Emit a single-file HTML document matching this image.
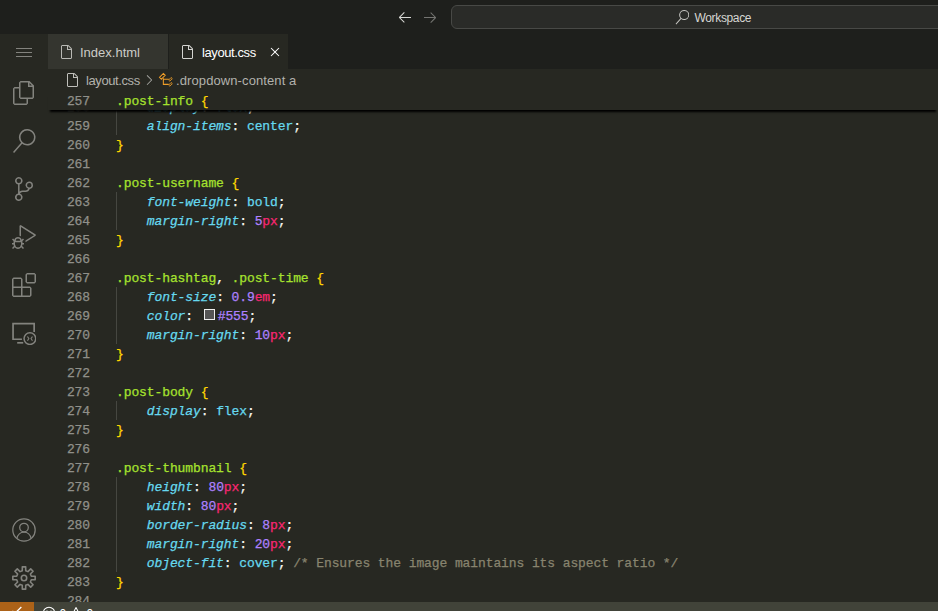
<!DOCTYPE html>
<html lang="en">
<head>
<meta charset="utf-8">
<title>layout.css - Workspace</title>
<style>
*{box-sizing:border-box;margin:0;padding:0}
html,body{width:938px;height:611px;overflow:hidden;background:#272822}
body{position:relative;font-family:"Liberation Sans",sans-serif;font-size:13px;color:#ccccc7;-webkit-font-smoothing:antialiased}
.abs{position:absolute}
/* title bar */
#title{left:0;top:0;width:938px;height:34px;background:#1e1f1c}
#cmd{left:451px;top:5px;width:520px;height:24px;border:1px solid #484946;border-radius:6px;background:#2a2b28}
#ws{left:694.5px;top:6px;letter-spacing:-0.35px;height:24px;line-height:24px;font-size:12px;color:#d6d6d2;white-space:nowrap}
/* tab strip */
#tabs{left:0;top:34px;width:938px;height:35px;background:#1e1f1c}
#actbar{left:0;top:34px;width:48px;height:568px;background:#272822}
.tab{top:34px;height:35px;white-space:nowrap}
#tab1{left:48px;width:120px;background:#34352f;color:#ccccc7}
#tab2{left:169px;width:119px;background:#272822;color:#ffffff}
.tab .lbl{position:absolute;top:1px;height:35px;line-height:35px;font-size:13px}
.ico16{position:absolute;width:16px;height:16px}
/* breadcrumbs */
#crumbs{left:48px;top:69px;width:890px;height:22px;background:#272822;color:#b2b2ad;white-space:nowrap}
#crumbs .lbl{position:absolute;top:1px;height:22px;line-height:22px;font-size:13px}
/* editor */
#editor{left:48px;top:91px;width:890px;height:511px;background:#272822;overflow:hidden}
.ln{position:absolute;left:0;width:890px;height:19px;line-height:19px;font-family:"Liberation Mono",monospace;font-size:13px;letter-spacing:-0.1px;white-space:pre;color:#f8f8f2;-webkit-text-stroke:.25px}
.ln .n{position:absolute;left:0;top:1px;width:42px;text-align:right;color:#90908a}
.ln .c{position:absolute;left:68px;top:1px}
.g{position:absolute;left:68px;width:1px;background:#464741}
#sticky{left:48px;top:91px;width:890px;height:19px;background:#272822;box-shadow:0 4px 2px -2px #000}
/* syntax */
.s{color:#a6e22e}.b{color:#ffd700}.p{color:#66d9ef;font-style:italic}.v{color:#66d9ef}
.u{color:#ae81ff}.k{color:#f92672}.m{color:#88846f}
.sw{display:inline-block;width:11px;height:11px;border:1px solid #eeeeee;background:#555555;margin:0 2.9px 0 3.1px;vertical-align:0px}
/* status bar */
#status{left:0;top:602px;width:938px;height:22px;background:#414339;color:#ffffff;font-size:12px}
#remote{left:0;top:602px;width:34px;height:22px;background:#ac6218}
.st{position:absolute;top:603px;height:22px;line-height:22px;font-size:12px;color:#fff}
</style>
</head>
<body>
<div id="title" class="abs"></div>
<div id="cmd" class="abs"></div>
<div id="ws" class="abs">Workspace</div>
<div id="tabs" class="abs"></div>
<div id="actbar" class="abs"></div>
<div id="tab1" class="abs tab"><span class="lbl" style="left:32px">Index.html</span></div>
<div id="tab2" class="abs tab"><span class="lbl" style="left:33px;letter-spacing:-0.4px">layout.css</span></div>
<div id="crumbs" class="abs"><span class="lbl" style="left:38px;letter-spacing:-0.4px">layout.css</span><span class="lbl" style="left:128px;letter-spacing:.1px">.dropdown-content a</span></div>
<div id="editor" class="abs">
<!--LINES-->
<div class="ln" style="top:6px"><span class="n">258</span><span class="g" style="top:0;height:19px"></span><span class="c">    <span class="p">display</span>: <span class="v">flex</span>;</span></div>
<div class="ln" style="top:25px"><span class="n">259</span><span class="g" style="top:0;height:19px"></span><span class="c">    <span class="p">align-items</span>: <span class="v">center</span>;</span></div>
<div class="ln" style="top:44px"><span class="n">260</span><span class="c"><span class="b">}</span></span></div>
<div class="ln" style="top:63px"><span class="n">261</span><span class="c"></span></div>
<div class="ln" style="top:82px"><span class="n">262</span><span class="c"><span class="s">.post-username</span> <span class="b">{</span></span></div>
<div class="ln" style="top:101px"><span class="n">263</span><span class="g" style="top:0;height:19px"></span><span class="c">    <span class="p">font-weight</span>: <span class="v">bold</span>;</span></div>
<div class="ln" style="top:120px"><span class="n">264</span><span class="g" style="top:0;height:19px"></span><span class="c">    <span class="p">margin-right</span>: <span class="u">5</span><span class="k">px</span>;</span></div>
<div class="ln" style="top:139px"><span class="n">265</span><span class="c"><span class="b">}</span></span></div>
<div class="ln" style="top:158px"><span class="n">266</span><span class="c"></span></div>
<div class="ln" style="top:177px"><span class="n">267</span><span class="c"><span class="s">.post-hashtag</span>, <span class="s">.post-time</span> <span class="b">{</span></span></div>
<div class="ln" style="top:196px"><span class="n">268</span><span class="g" style="top:0;height:19px"></span><span class="c">    <span class="p">font-size</span>: <span class="u">0.9</span><span class="k">em</span>;</span></div>
<div class="ln" style="top:215px"><span class="n">269</span><span class="g" style="top:0;height:19px"></span><span class="c">    <span class="p">color</span>: <span class="sw"></span><span class="u">#555</span>;</span></div>
<div class="ln" style="top:234px"><span class="n">270</span><span class="g" style="top:0;height:19px"></span><span class="c">    <span class="p">margin-right</span>: <span class="u">10</span><span class="k">px</span>;</span></div>
<div class="ln" style="top:253px"><span class="n">271</span><span class="c"><span class="b">}</span></span></div>
<div class="ln" style="top:272px"><span class="n">272</span><span class="c"></span></div>
<div class="ln" style="top:291px"><span class="n">273</span><span class="c"><span class="s">.post-body</span> <span class="b">{</span></span></div>
<div class="ln" style="top:310px"><span class="n">274</span><span class="g" style="top:0;height:19px"></span><span class="c">    <span class="p">display</span>: <span class="v">flex</span>;</span></div>
<div class="ln" style="top:329px"><span class="n">275</span><span class="c"><span class="b">}</span></span></div>
<div class="ln" style="top:348px"><span class="n">276</span><span class="c"></span></div>
<div class="ln" style="top:367px"><span class="n">277</span><span class="c"><span class="s">.post-thumbnail</span> <span class="b">{</span></span></div>
<div class="ln" style="top:386px"><span class="n">278</span><span class="g" style="top:0;height:19px"></span><span class="c">    <span class="p">height</span>: <span class="u">80</span><span class="k">px</span>;</span></div>
<div class="ln" style="top:405px"><span class="n">279</span><span class="g" style="top:0;height:19px"></span><span class="c">    <span class="p">width</span>: <span class="u">80</span><span class="k">px</span>;</span></div>
<div class="ln" style="top:424px"><span class="n">280</span><span class="g" style="top:0;height:19px"></span><span class="c">    <span class="p">border-radius</span>: <span class="u">8</span><span class="k">px</span>;</span></div>
<div class="ln" style="top:443px"><span class="n">281</span><span class="g" style="top:0;height:19px"></span><span class="c">    <span class="p">margin-right</span>: <span class="u">20</span><span class="k">px</span>;</span></div>
<div class="ln" style="top:462px"><span class="n">282</span><span class="g" style="top:0;height:19px"></span><span class="c">    <span class="p">object-fit</span>: <span class="v">cover</span>; <span class="m">/* Ensures the image maintains its aspect ratio */</span></span></div>
<div class="ln" style="top:481px"><span class="n">283</span><span class="c"><span class="b">}</span></span></div>
<div class="ln" style="top:500px"><span class="n">284</span><span class="c"></span></div>
<!--/LINES-->
</div>
<div id="sticky" class="abs"><div class="ln" style="top:0"><span class="n">257</span><span class="c"><span class="s">.post-info</span> <span class="b">{</span></span></div></div>
<div id="status" class="abs"></div>
<div id="remote" class="abs"></div>
<div class="st" style="left:59.5px">0</div>
<div class="st" style="left:86.5px">0</div>
<!--ICONS-->
<svg class="abs" style="left:397px;top:9px" width="16" height="16" viewBox="0 0 16 16" fill="#d8d8d4" ><path d="M7 3.093l-5 5V8.8l5 5 .707-.707-4.146-4.147H14v-1H3.56L7.708 3.8 7 3.093z"/></svg>
<svg class="abs" style="left:422.3px;top:9px" width="16" height="16" viewBox="0 0 16 16" fill="#747471" ><path d="M9 13.887l5-5V8.18l-5-5-.707.707 4.146 4.147H2v1h10.44l-4.147 4.147.707.706z"/></svg>
<svg class="abs" style="left:674.9px;top:10px" width="14.5" height="14.5" viewBox="0 0 24 24" fill="#c8c8c4" ><path d="M15.25 0a8.25 8.25 0 0 0-6.18 13.72L1 22.88l1.12 1 8.05-9.12A8.251 8.251 0 1 0 15.25.01V0zm0 15a6.75 6.75 0 1 1 0-13.5 6.75 6.75 0 0 1 0 13.5z"/></svg>
<svg class="abs" style="left:16px;top:44px" width="16" height="16" viewBox="0 0 16 16" fill="#83837e" ><path d="M16 5H0V4h16v1zm0 8H0v-1h16v1zm0-4.008H0V8h16v.992z"/></svg>
<svg class="abs" style="left:12px;top:81px" width="24" height="24" viewBox="0 0 24 24" fill="#83837e" color="#83837e"><path d="M17.5 0h-9L7 1.5V6H2.5L1 7.5v15.07L2.5 24h12.07L16 22.57V18h4.7l1.3-1.43V4.5L17.5 0zm0 2.12l2.38 2.38H17.5V2.12zm-3 20.38h-12v-15H7v9.07L8.5 18h6v4.5zm6-6h-12v-15H16V6h4.5v10.5z"/></svg>
<svg class="abs" style="left:12px;top:129px" width="24" height="24" viewBox="0 0 24 24" fill="#83837e" color="#83837e"><path d="M15.25 0a8.25 8.25 0 0 0-6.18 13.72L1 22.88l1.12 1 8.05-9.12A8.251 8.251 0 1 0 15.25.01V0zm0 15a6.75 6.75 0 1 1 0-13.5 6.75 6.75 0 0 1 0 13.5z"/></svg>
<svg class="abs" style="left:12px;top:177px" width="24" height="24" viewBox="0 0 24 24" fill="#83837e" color="#83837e"><path d="M21.007 8.222A3.738 3.738 0 0 0 15.045 5.2a3.737 3.737 0 0 0 1.156 6.583 2.988 2.988 0 0 1-2.668 1.67h-2.99a4.456 4.456 0 0 0-2.989 1.165V7.4a3.737 3.737 0 1 0-1.494 0v9.117a3.776 3.776 0 1 0 1.816.099 2.99 2.99 0 0 1 2.668-1.667h2.99a4.484 4.484 0 0 0 4.223-3.039 3.736 3.736 0 0 0 3.25-3.687zM4.565 3.738a2.242 2.242 0 1 1 4.484 0 2.242 2.242 0 0 1-4.484 0zm4.484 16.441a2.242 2.242 0 1 1-4.484 0 2.242 2.242 0 0 1 4.484 0zm8.221-9.715a2.242 2.242 0 1 1 0-4.485 2.242 2.242 0 0 1 0 4.485z"/></svg>
<svg class="abs" style="left:12px;top:225px" width="24" height="24" viewBox="0 0 24 24" fill="#83837e" color="#83837e"><path d="M10.94 13.5l-1.32 1.32a3.73 3.73 0 0 0-7.24 0L1.06 13.5 0 14.56l1.72 1.72-.22.22V18H0v1.5h1.5v.08c.077.489.214.966.41 1.42L0 22.94 1.06 24l1.65-1.65A4.308 4.308 0 0 0 6 24a4.31 4.31 0 0 0 3.29-1.65L10.94 24 12 22.94 10.09 21c.198-.464.336-.951.41-1.45v-.1H12V18h-1.5v-1.5l-.22-.22L12 14.56l-1.06-1.06zM6 13.5a2.25 2.25 0 0 1 2.25 2.25h-4.5A2.25 2.25 0 0 1 6 13.5zm3 6a3.33 3.33 0 0 1-3 3 3.33 3.33 0 0 1-3-3v-2.25h6v2.25zm14.76-9.9v1.26L13.5 17.37V15.6l8.5-5.37L9 2v9.46a5.07 5.07 0 0 0-1.5-.72V.63L8.64 0l15.12 9.6z"/></svg>
<svg class="abs" style="left:12px;top:273px" width="24" height="24" viewBox="0 0 24 24" fill="#83837e" color="#83837e"><path fill-rule="evenodd" clip-rule="evenodd" d="M13.5 1.5L15 0h7.5L24 1.5V9l-1.5 1.5H15L13.5 9V1.5zm1.5 0V9h7.5V1.5H15zM0 15V6l1.5-1.5H9L10.5 6v7.5H18l1.5 1.5v7.5L18 24H1.5L0 22.5V15zm9-1.5V6H1.5v7.5H9zM9 15H1.5v7.5H9V15zm1.5 7.5H18V15h-7.5v7.5z"/></svg>
<svg class="abs" style="left:12px;top:321px" width="24" height="24" viewBox="0 0 24 24" fill="#83837e" color="#83837e"><g fill="none" stroke="currentColor" stroke-width="1.7"><path d="M22.15 10.9V2.65H1.05v15.6h8.9"/><path d="M5.2 21.8h6"/><circle cx="17.9" cy="17.6" r="5.85" stroke-width="1.5"/><path d="M15.45 15.5l1.4 2.1-1.4 2.1M20.45 15.5l-1.4 2.1 1.4 2.1" stroke-width="1.1"/></g></svg>
<svg class="abs" style="left:12px;top:518px" width="24" height="24" viewBox="0 0 24 24" fill="#83837e" color="#83837e"><g fill="none" stroke="currentColor" stroke-width="1.25"><circle cx="12" cy="12" r="11.2"/><circle cx="12" cy="9.6" r="4.3"/><path d="M4.9 20.4c.7-3.6 3.6-6.3 7.1-6.3s6.4 2.7 7.1 6.3"/></g></svg>
<svg class="abs" style="left:12px;top:566px" width="24" height="24" viewBox="0 0 24 24" fill="#83837e" color="#83837e"><g fill="none" stroke="currentColor" stroke-width="1.6" stroke-linejoin="round"><path d="M10.29 4.70 L10.31 0.83 L13.69 0.83 L13.71 4.70 L15.95 5.63 L18.71 2.91 L21.09 5.29 L18.37 8.05 L19.30 10.29 L23.17 10.31 L23.17 13.69 L19.30 13.71 L18.37 15.95 L21.09 18.71 L18.71 21.09 L15.95 18.37 L13.71 19.30 L13.69 23.17 L10.31 23.17 L10.29 19.30 L8.05 18.37 L5.29 21.09 L2.91 18.71 L5.63 15.95 L4.70 13.71 L0.83 13.69 L0.83 10.31 L4.70 10.29 L5.63 8.05 L2.91 5.29 L5.29 2.91 L8.05 5.63Z"/><circle cx="12" cy="12" r="2.7"/></g></svg>
<svg class="abs" style="left:58px;top:44px" width="16" height="16" viewBox="0 0 16 16" fill="#b9b9b4" ><path d="M13.71 4.29l-3-3L10 1H4L3 2v12l1 1h9l1-1V5l-.29-.71zM13 14H4V2h5v4h4v8zm-3-9V2l3 3h-3z"/></svg>
<svg class="abs" style="left:179px;top:44px" width="16" height="16" viewBox="0 0 16 16" fill="#d4d4d0" ><path d="M13.71 4.29l-3-3L10 1H4L3 2v12l1 1h9l1-1V5l-.29-.71zM13 14H4V2h5v4h4v8zm-3-9V2l3 3h-3z"/></svg>
<svg class="abs" style="left:266.5px;top:44px" width="16" height="16" viewBox="0 0 16 16" fill="#ffffff" ><path d="M8 8.707l3.646 3.647.708-.707L8.707 8l3.647-3.646-.707-.708L8 7.293 4.354 3.646l-.707.708L7.293 8l-3.646 3.646.707.708L8 8.707z"/></svg>
<svg class="abs" style="left:64px;top:72px" width="16" height="16" viewBox="0 0 16 16" fill="#c0c0bb" ><path d="M13.71 4.29l-3-3L10 1H4L3 2v12l1 1h9l1-1V5l-.29-.71zM13 14H4V2h5v4h4v8zm-3-9V2l3 3h-3z"/></svg>
<svg class="abs" style="left:141px;top:72px" width="16" height="16" viewBox="0 0 16 16" fill="#a9a9a5" ><path d="M10.072 8.024L5.715 3.667l.618-.62L11 7.716v.618L6.333 13l-.618-.619 4.357-4.357z"/></svg>
<svg class="abs" style="left:157.7px;top:72px" width="16" height="16" viewBox="0 0 16 16" fill="none" ><g fill="none" stroke="#ee9d28" stroke-width="1.05" stroke-linejoin="miter"><path d="M1.5 5.35L5.35 1.5 7.2 3.35 3.35 7.2z"/><path d="M5.35 6.2v6.15h5.3M5.35 7.33h5.4"/><path d="M10.6 8L13.1 5.5l1.15 1.15-2.5 2.5z" stroke-width=".9"/><path d="M10.6 13l2.5-2.5 1.15 1.15-2.5 2.5z" stroke-width=".9"/></g></svg>
<svg class="abs" style="left:9px;top:606px" width="16" height="16" viewBox="0 0 16 16" fill="none" ><g fill="none" stroke="#fff" stroke-width="1.3"><path d="M12.35 .95L8 5.3l4.35 4.35"/><path d="M3.45 4.9L7.8 9.25 3.45 13.6"/></g></svg>
<svg class="abs" style="left:42px;top:606px" width="14" height="14" viewBox="0 0 16 16" fill="none" ><g fill="none" stroke="#fff" stroke-width="1.15"><circle cx="8" cy="8" r="6.5"/><path d="M5.3 5.3l5.4 5.4M10.7 5.3l-5.4 5.4"/></g></svg>
<svg class="abs" style="left:69px;top:606px" width="14" height="14" viewBox="0 0 16 16" fill="none" ><g fill="none" stroke="#fff" stroke-width="1.15" stroke-linejoin="round"><path d="M8 1.8L1.5 14h13L8 1.8z"/><path d="M8 6v4.5M8 11.5v1.2"/></g></svg>
<!--/ICONS-->
</body>
</html>
